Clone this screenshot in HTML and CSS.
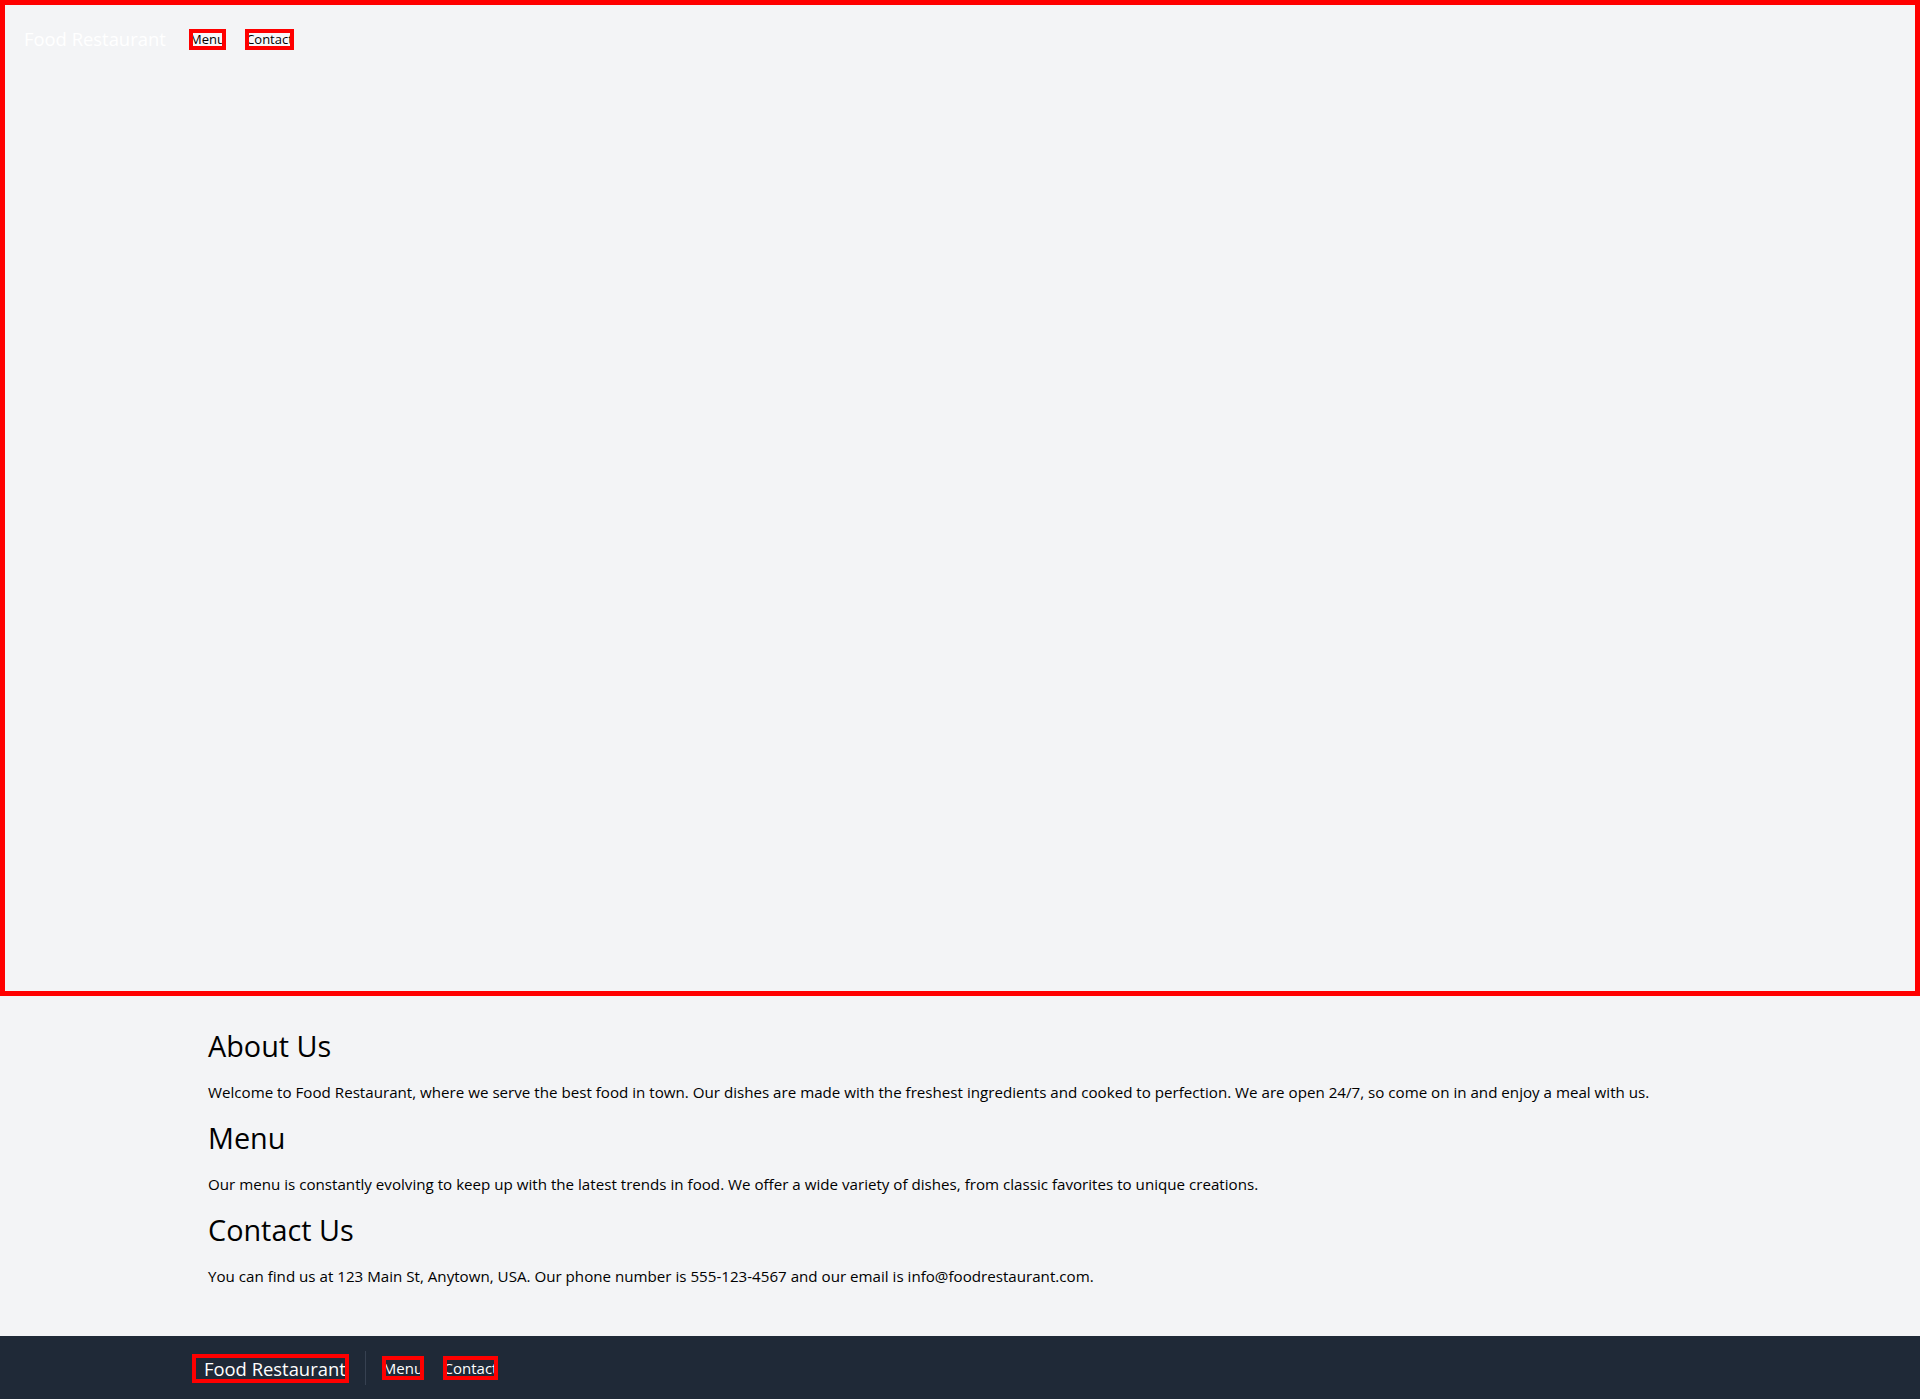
FILE: index.html
```html
<!DOCTYPE html>
<html lang="en">
<head>
<meta charset="utf-8">
<title>Food Restaurant</title>
<link rel="stylesheet" href="styles.css">
</head>
<body>
<header class="hero">
  <nav class="hero-nav">
    <span class="hero-brand">Food Restaurant</span>
    <a class="box-link hero-link hero-menu" href="#menu"><span>Menu</span></a>
    <a class="box-link hero-link hero-contact" href="#contact"><span>Contact</span></a>
  </nav>
</header>
<main class="content">
  <section class="section" id="about">
    <h2 class="section-title">About Us</h2>
    <p class="section-text">Welcome to Food Restaurant, where we serve the best food in town. Our dishes are made with the freshest ingredients and cooked to perfection. We are open 24/7, so come on in and enjoy a meal with us.</p>
  </section>
  <section class="section" id="menu">
    <h2 class="section-title">Menu</h2>
    <p class="section-text">Our menu is constantly evolving to keep up with the latest trends in food. We offer a wide variety of dishes, from classic favorites to unique creations.</p>
  </section>
  <section class="section" id="contact">
    <h2 class="section-title">Contact Us</h2>
    <p class="section-text">You can find us at 123 Main St, Anytown, USA. Our phone number is 555-123-4567 and our email is info@foodrestaurant.com.</p>
  </section>
</main>
<footer class="footer">
  <div class="footer-inner">
    <a class="box-link footer-brand" href="#"><span>Food Restaurant</span></a>
    <span class="footer-sep"></span>
    <a class="box-link footer-link footer-menu" href="#menu"><span>Menu</span></a>
    <a class="box-link footer-link footer-contact" href="#contact"><span>Contact</span></a>
  </div>
</footer>
</body>
</html>
```

FILE: styles.css
```css
html, body {
  margin: 0;
  padding: 0;
}

body {
  background: #f3f4f6;
  font-family: "Open Sans", "Noto Sans", sans-serif;
  color: #000;
}

a {
  text-decoration: none;
}

.hero {
  box-sizing: border-box;
  height: 996px;
  border: 5px solid #ff0000;
  background: #f3f4f6;
}

.hero-nav {
  display: flex;
  align-items: center;
  padding: 20px 19px;
}

.hero-brand {
  width: 141px;
  font-size: 18.4px;
  line-height: 28px;
  color: #ffffff;
  white-space: nowrap;
}

.box-link {
  box-sizing: border-box;
  display: flex;
  align-items: center;
  justify-content: center;
  overflow: hidden;
  white-space: nowrap;
  outline: 4px solid #ff0000;
  outline-offset: -4px;
}

.hero-link {
  height: 21px;
  font-size: 13px;
  color: #000;
  background: #f7f7f8;
}

.hero-menu {
  width: 37px;
  margin-left: 24px;
}

.hero-contact {
  width: 49px;
  margin-left: 19px;
}

.content {
  max-width: 1536px;
  margin: 0 auto;
  padding: 32px 16px;
  box-sizing: border-box;
}

.section {
  margin-bottom: 16px;
}

.section-title {
  margin: 0 0 16px;
  font-size: 28.8px;
  line-height: 36px;
  font-weight: 400;
}

.section-text {
  margin: 0;
  font-size: 15.15px;
  line-height: 24px;
}

.footer {
  background: #1f2937;
  color: #fff;
}

.footer-inner {
  max-width: 1536px;
  margin: 0 auto;
  height: 64px;
  display: flex;
  align-items: center;
}

.footer-brand {
  width: 157px;
  height: 29px;
  justify-content: flex-start;
  padding-left: 12px;
  font-size: 18.4px;
  color: #fff;
}

.footer-sep {
  width: 1px;
  height: 34px;
  margin-left: 16px;
  background: #374151;
}

.footer-link {
  height: 24px;
  font-size: 15px;
  color: #fff;
}

.footer-menu {
  width: 42px;
  margin-left: 16px;
}

.footer-contact {
  width: 55px;
  margin-left: 19px;
}
```
